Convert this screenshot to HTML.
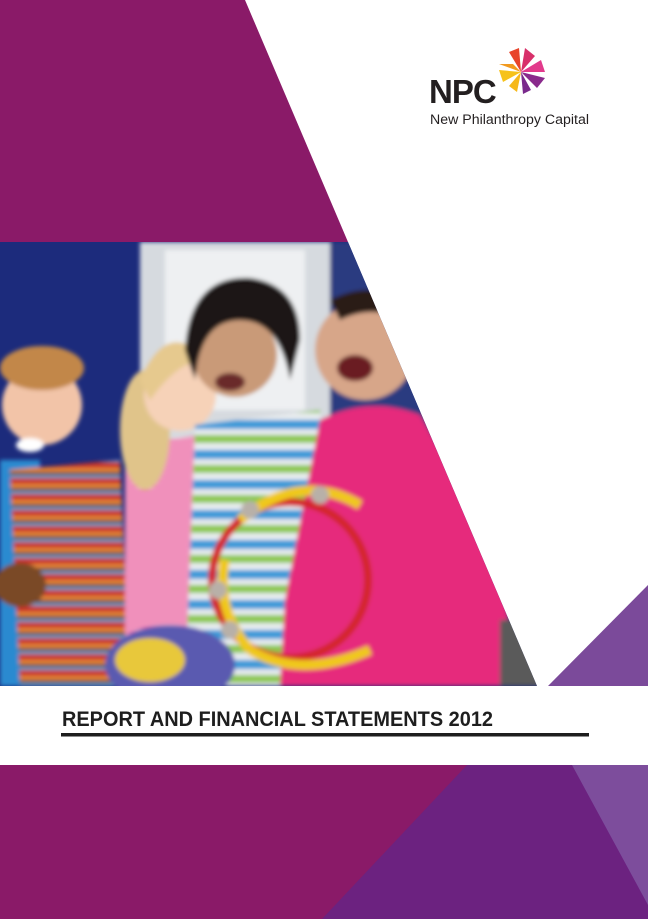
<!DOCTYPE html>
<html><head><meta charset="utf-8"><style>
html,body{margin:0;padding:0;background:#fff}
body{width:648px;height:919px;overflow:hidden;position:relative;font-family:"Liberation Sans",sans-serif}
svg{position:absolute;left:0;top:0}
</style></head><body>
<svg width="648" height="919" viewBox="0 0 648 919">
<defs>
<clipPath id="ph"><polygon points="0,242 348,242 537,686 0,686"/></clipPath>
<filter id="bl"><feGaussianBlur stdDeviation="2"/></filter>
<pattern id="st1" width="10" height="16" patternUnits="userSpaceOnUse"><rect width="10" height="16" fill="#c8312c"/><rect y="4" width="10" height="4" fill="#e88a3a"/><rect y="8" width="10" height="3" fill="#5a3a2a"/><rect y="11" width="10" height="3" fill="#6aa0cc"/></pattern>
<pattern id="st2" width="10" height="5" patternUnits="userSpaceOnUse"><rect width="10" height="5" fill="#ec6aa8"/><rect y="3" width="10" height="2" fill="#f6b8d4"/></pattern>
<pattern id="st3" width="10" height="30" patternUnits="userSpaceOnUse"><rect width="10" height="30" fill="#e8ecef"/><rect y="0" width="10" height="9" fill="#3a9ad8"/><rect y="15" width="10" height="8" fill="#8cc850"/></pattern>
</defs>
<polygon points="0,0 245,0 348,242 0,242" fill="#8a1a68"/>
<g clip-path="url(#ph)">
<rect x="0" y="242" width="548" height="444" fill="#1c2b7c"/>
<g filter="url(#bl)">
<rect x="140" y="242" width="190" height="200" fill="#d6dadf"/>
<rect x="165" y="250" width="140" height="160" fill="#eef0f2"/>
<rect x="330" y="242" width="220" height="444" fill="#2a3a80"/>
<rect x="0" y="460" width="40" height="226" fill="#2a8ad0"/>
<path d="M10,470 L120,460 L130,686 L20,686Z" fill="url(#st1)"/>
<circle cx="42" cy="405" r="40" fill="#f2c4a8"/>
<ellipse cx="42" cy="368" rx="42" ry="22" fill="#c2874a"/>
<ellipse cx="30" cy="445" rx="14" ry="7" fill="#fff"/>
<ellipse cx="20" cy="585" rx="26" ry="22" fill="#7a4a28"/>
<path d="M125,445 L240,430 L245,686 L125,686Z" fill="url(#st2)"/>
<ellipse cx="145" cy="430" rx="25" ry="60" fill="#e0c48a"/>
<circle cx="180" cy="395" r="36" fill="#f6d2b8"/>
<path d="M140,380 Q170,310 215,370 Q190,345 150,400Z" fill="#e6c98e"/>
<path d="M195,425 L320,410 L335,686 L185,686Z" fill="url(#st3)"/>
<circle cx="235" cy="355" r="42" fill="#c99a78"/>
<path d="M185,350 Q190,275 250,278 Q300,285 300,340 L290,380 Q280,320 240,320 Q200,320 195,380Z" fill="#1a1412"/>
<ellipse cx="230" cy="382" rx="15" ry="9" fill="#6a2a2a"/>
<path d="M320,420 Q370,395 420,415 L505,560 L510,686 L280,686 L285,600Z" fill="#e62a7c"/>
<circle cx="365" cy="350" r="50" fill="#d7a689"/>
<ellipse cx="355" cy="368" rx="18" ry="13" fill="#6a1a24"/>
<path d="M330,300 Q370,280 400,300 L420,330 Q380,300 340,320Z" fill="#2a1a14"/>
<ellipse cx="170" cy="665" rx="65" ry="40" fill="#5a5ab0"/>
<ellipse cx="150" cy="660" rx="35" ry="22" fill="#e8c83a"/>
<circle cx="290" cy="580" r="78" fill="none" stroke="#d4282a" stroke-width="8"/>
<path d="M240,520 Q300,470 360,505 M250,650 Q300,680 370,650 M225,560 Q215,610 250,650" fill="none" stroke="#f0c81a" stroke-width="10"/>
<circle cx="218" cy="590" r="9" fill="#b8b0a8"/><circle cx="230" cy="630" r="9" fill="#b8b0a8"/><circle cx="250" cy="510" r="9" fill="#b8b0a8"/><circle cx="320" cy="495" r="9" fill="#b8b0a8"/>
<rect x="500" y="620" width="40" height="66" fill="#5a5a5a"/>
</g>
</g>
<polygon points="648,585 648,686 548,686" fill="#7b4a9a"/>
<g transform="translate(521,72)">
<polygon points="0,0 -22,-8 -8,-8" fill="#f29a1e"/>
<polygon points="0,0 -22,-2 -18,10" fill="#f6c21a"/>
<polygon points="0,0 -12,14 -4,20" fill="#f6b81a"/>
<polygon points="0,0 2,22 10,18" fill="#7a2a8c"/>
<polygon points="0,0 16,16 24,6" fill="#8a2a8c"/>
<polygon points="0,0 24,0 20,-12" fill="#e23a8c"/>
<polygon points="0,0 14,-16 4,-24" fill="#d8306a"/>
<polygon points="0,0 -2,-24 -12,-20" fill="#e8442a"/>
</g>
<text x="429" y="103" font-family="Liberation Sans" font-weight="bold" font-size="33" fill="#231f20" letter-spacing="-1">NPC</text>
<text x="430" y="124" font-family="Liberation Sans" font-size="13.5" fill="#231f20" textLength="159" lengthAdjust="spacingAndGlyphs">New Philanthropy Capital</text>
<text x="62" y="726" font-family="Liberation Sans" font-weight="bold" font-size="21" fill="#1e1e1e" textLength="431" lengthAdjust="spacingAndGlyphs">REPORT AND FINANCIAL STATEMENTS 2012</text>
<rect x="61" y="733" width="528" height="3.5" fill="#1e1e1e"/>
<rect x="0" y="765" width="648" height="154" fill="#8a1a68"/>
<polygon points="467,765 648,765 648,919 322,919" fill="#6c2280"/>
<polygon points="572,765 648,765 648,905" fill="#7d4d9c"/>
</svg>
</body></html>
